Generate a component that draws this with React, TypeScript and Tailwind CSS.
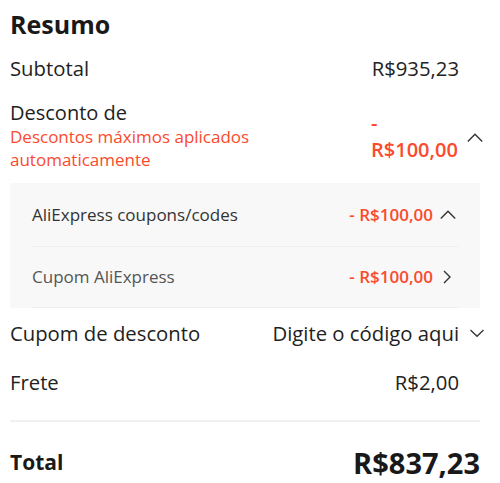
import React from "react"

const red = "text-[#fb4a2d]"

const ChevronUp = () => (
    <svg width="16" height="16" viewBox="0 0 16 16" fill="none" stroke="#333" strokeWidth="1.4">
        <path d="M0.8 11.5 L8 4.3 L15.2 11.5" />
    </svg>
)

const ChevronDown = () => (
    <svg width="16" height="16" viewBox="0 0 16 16" fill="none" stroke="#333" strokeWidth="1.3">
        <path d="M1.5 5 L8 11.3 L14.5 5" />
    </svg>
)

const ChevronRight = () => (
    <svg width="16" height="16" viewBox="0 0 16 16" fill="none" stroke="#333" strokeWidth="1.4">
        <path d="M4 2 L10 8 L4 14" />
    </svg>
)

const Row = ({ label, value, icon, className = "" }: { label: string; value: string; icon?: React.ReactNode; className?: string }) => (
    <div className={`flex items-center justify-between text-[20.3px] leading-[28px] text-[#222] ${className}`}>
        <p>{label}</p>
        <div className="flex items-center">
            <p>{value}</p>
            <div className="w-[21px] shrink-0 flex">
                {icon && <div className="ml-[10px] shrink-0 flex">{icon}</div>}
            </div>
        </div>
    </div>
)

export default function App() {
    return (
        <div className="w-[500px] h-[483px] bg-white px-[10px] pt-[8px] overflow-hidden" style={{ fontFamily: '"Open Sans", "Liberation Sans", sans-serif' }}>
            <div className="w-[470px]">
                <h1 className="text-[25px] leading-[33px] font-bold text-[#191919]">Resumo</h1>

                <Row label="Subtotal" value="R$935,23" className="mt-[13px]" />

                {/* desconto */}
                <div className="flex items-center justify-between mt-[19px]">
                    <div>
                        <p className="text-[20px] leading-[24px] text-[#222]">Desconto de</p>
                        <p className={`text-[17px] leading-[23px] ${red} w-[270px]`}>Descontos máximos aplicados automaticamente</p>
                    </div>
                    <div className="flex items-center">
                        <p className={`text-[20px] leading-[27px] font-semibold ${red} w-[88px]`}>- R$100,00</p>
                        <div className="w-[21px] shrink-0 flex">
                            <div className="ml-[8px] shrink-0 flex mt-[4px]"><ChevronUp /></div>
                        </div>
                    </div>
                </div>

                <div className="mt-[12px] bg-[#f8f8f8] px-[22px] pr-[21px]">
                    <div className="h-[64px] flex items-center justify-between border-b border-[#eeeeee] text-[17px]">
                        <p className="text-[#333] font-medium">AliExpress coupons/codes</p>
                        <div className="flex items-center">
                            <p className={`${red} font-semibold`}>- R$100,00</p>
                            <div className="ml-[7px] mr-[3px] flex"><ChevronUp /></div>
                        </div>
                    </div>
                    <div className="h-[61px] flex items-center justify-between border-b border-[#eeeeee] text-[17px]">
                        <p className="text-[#555]">Cupom AliExpress</p>
                        <div className="flex items-center">
                            <p className={`${red} font-semibold`}>- R$100,00</p>
                            <div className="ml-[7px] mr-[3px] flex"><ChevronRight /></div>
                        </div>
                    </div>
                </div>

                <Row label="Cupom de desconto" value="Digite o código aqui" icon={<ChevronDown />} className="mt-[11px]" />
                <Row label="Frete" value="R$2,00" className="mt-[21px]" />

                <div className="mt-[24px] h-[2px] bg-[#f0f0f0]" />

                <div className="mt-[22px] flex items-center justify-between text-[#191919]">
                    <p className="text-[21px] font-bold">Total</p>
                    <p className="text-[29px] leading-[38px] font-bold">R$837,23</p>
                </div>
            </div>
        </div>
    )
}
